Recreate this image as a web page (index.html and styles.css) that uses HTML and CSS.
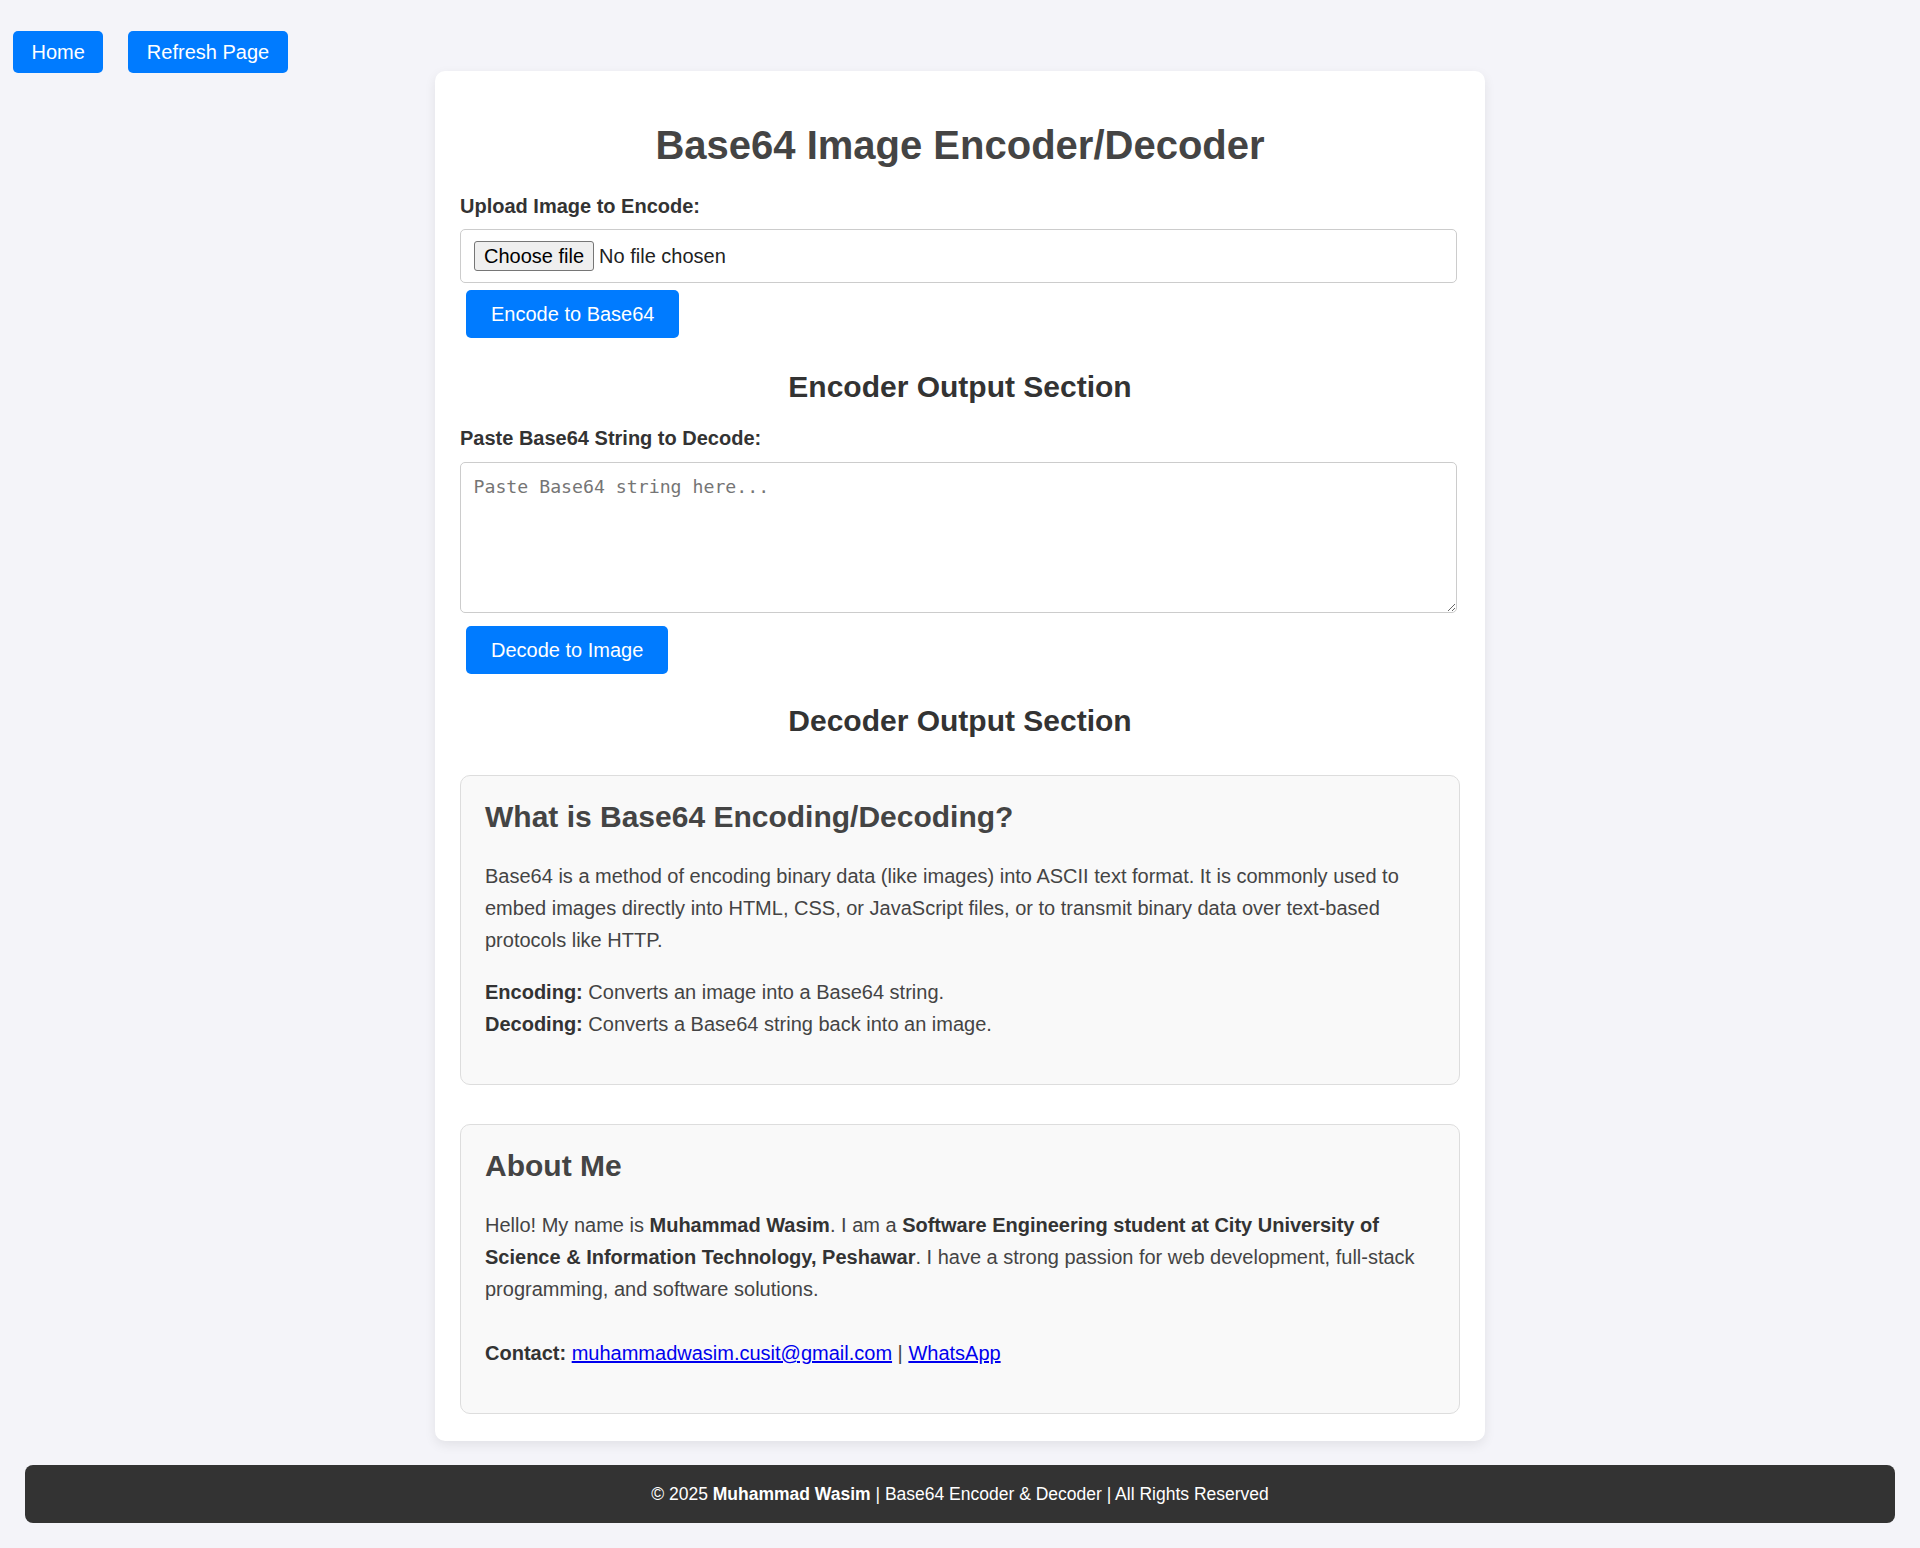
FILE: index.html
```html
<!DOCTYPE html>
<html lang="en">
<head>
<meta charset="UTF-8">
<title>Base64 Image Encoder/Decoder</title>
<link rel="stylesheet" href="styles.css">
</head>
<body>
<nav class="top-nav">
  <a class="nav-btn" href="#">Home</a>
  <a class="nav-btn" href="#">Refresh Page</a>
</nav>

<main class="container">
  <h1 class="title">Base64 Image Encoder/Decoder</h1>

  <label class="field-label">Upload Image to Encode:</label>
  <div class="file-field">
    <span class="file-btn">Choose file</span>
    <span class="file-name">No file chosen</span>
  </div>
  <button class="action-btn encode-btn">Encode to Base64</button>

  <h2 class="section-title encoder-title">Encoder Output Section</h2>

  <label class="field-label decode-label">Paste Base64 String to Decode:</label>
  <textarea class="b64-input" placeholder="Paste Base64 string here..."></textarea>
  <button class="action-btn decode-btn">Decode to Image</button>

  <h2 class="section-title decoder-title">Decoder Output Section</h2>

  <section class="info-box">
    <h2 class="info-title">What is Base64 Encoding/Decoding?</h2>
    <p class="info-text">Base64 is a method of encoding binary data (like images) into ASCII text format. It is commonly used to embed images directly into HTML, CSS, or JavaScript files, or to transmit binary data over text-based protocols like HTTP.</p>
    <p class="info-text"><strong>Encoding:</strong> Converts an image into a Base64 string.<br><strong>Decoding:</strong> Converts a Base64 string back into an image.</p>
  </section>

  <section class="info-box about-box">
    <h2 class="info-title">About Me</h2>
    <p class="info-text">Hello! My name is <strong>Muhammad Wasim</strong>. I am a <strong>Software Engineering student at City University of Science &amp; Information Technology, Peshawar</strong>. I have a strong passion for web development, full-stack programming, and software solutions.<br><br><strong>Contact:</strong> <a class="link" href="#">muhammadwasim.cusit@gmail.com</a> | <a class="link" href="#">WhatsApp</a></p>
  </section>
</main>

<footer class="site-footer">
  &copy; 2025 <strong>Muhammad Wasim</strong> | Base64 Encoder &amp; Decoder | All Rights Reserved
</footer>
</body>
</html>
```

FILE: styles.css
```css
* {
  box-sizing: border-box;
}

body {
  margin: 0;
  padding: 71px 25px 25px;
  background: #f4f4f9;
  color: #333;
  font-family: "Liberation Sans", Arial, sans-serif;
  position: relative;
}

.top-nav {
  position: absolute;
  top: 31px;
  left: 13px;
  display: flex;
  gap: 25px;
}

.nav-btn {
  display: block;
  background: #007bff;
  color: #fff;
  text-decoration: none;
  font-size: 20px;
  line-height: 22px;
  padding: 10px 18.5px;
  border-radius: 5px;
}

.container {
  width: 1050px;
  margin: 0 auto;
  padding: 25px 25px 27px;
  background: #fff;
  border-radius: 10px;
  box-shadow: 0 4px 12px rgba(0, 0, 0, 0.08);
}

.title {
  margin: 26px 0 27px;
  font-size: 40px;
  line-height: 46px;
  font-weight: bold;
  color: #444;
  text-align: center;
}

.field-label {
  display: block;
  font-size: 20px;
  line-height: 23px;
  font-weight: bold;
  color: #333;
  margin-bottom: 11px;
}

.decode-label {
  margin-bottom: 12px;
}

.file-field {
  width: calc(100% - 3px);
  display: flex;
  align-items: center;
  padding: 11px 13px;
  border: 1px solid #ccc;
  border-radius: 5px;
  font-size: 20px;
}

.file-btn {
  display: block;
  font-size: 20px;
  line-height: 22px;
  padding: 3px 9px;
  border: 1px solid #767676;
  border-radius: 3px;
  background: #efefef;
  color: #000;
}

.file-name {
  margin-left: 5px;
  color: #222;
  line-height: 22px;
}

.action-btn {
  display: block;
  width: fit-content;
  margin: 7px 6px 0;
  padding: 12px 25px;
  border: none;
  border-radius: 5px;
  background: #007bff;
  color: #fff;
  font-family: "Liberation Sans", Arial, sans-serif;
  font-size: 20px;
  line-height: 24px;
}

.decode-btn {
  margin-top: 13px;
}

.section-title {
  margin: 32px 0 23px;
  font-size: 30px;
  line-height: 34px;
  font-weight: bold;
  color: #333;
  text-align: center;
}

.decoder-title {
  margin: 30px 0 37px;
}

.b64-input {
  display: block;
  width: calc(100% - 3px);
  height: 151px;
  padding: 12.5px;
  border: 1px solid #ccc;
  border-radius: 5px;
  font-family: "DejaVu Sans Mono", "Liberation Mono", monospace;
  font-size: 18.2px;
  color: #333;
  resize: vertical;
}

.b64-input::placeholder {
  color: #757575;
}

.info-box {
  padding: 24px;
  border: 1px solid #ddd;
  border-radius: 10px;
  background: #f9f9f9;
}

.about-box {
  margin-top: 39px;
}

.info-title {
  margin: 0 0 26px;
  font-size: 30px;
  line-height: 34px;
  font-weight: bold;
  color: #444;
}

.info-text {
  margin: 0 0 20px;
  font-size: 20px;
  line-height: 32px;
  color: #444;
}

.info-text strong {
  color: #333;
}

.link {
  color: #0000ee;
  text-decoration: underline;
}

.site-footer {
  margin-top: 24px;
  padding: 19px;
  background: #333;
  color: #fff;
  border-radius: 8px;
  text-align: center;
  font-size: 17.5px;
  line-height: 20px;
}
```
